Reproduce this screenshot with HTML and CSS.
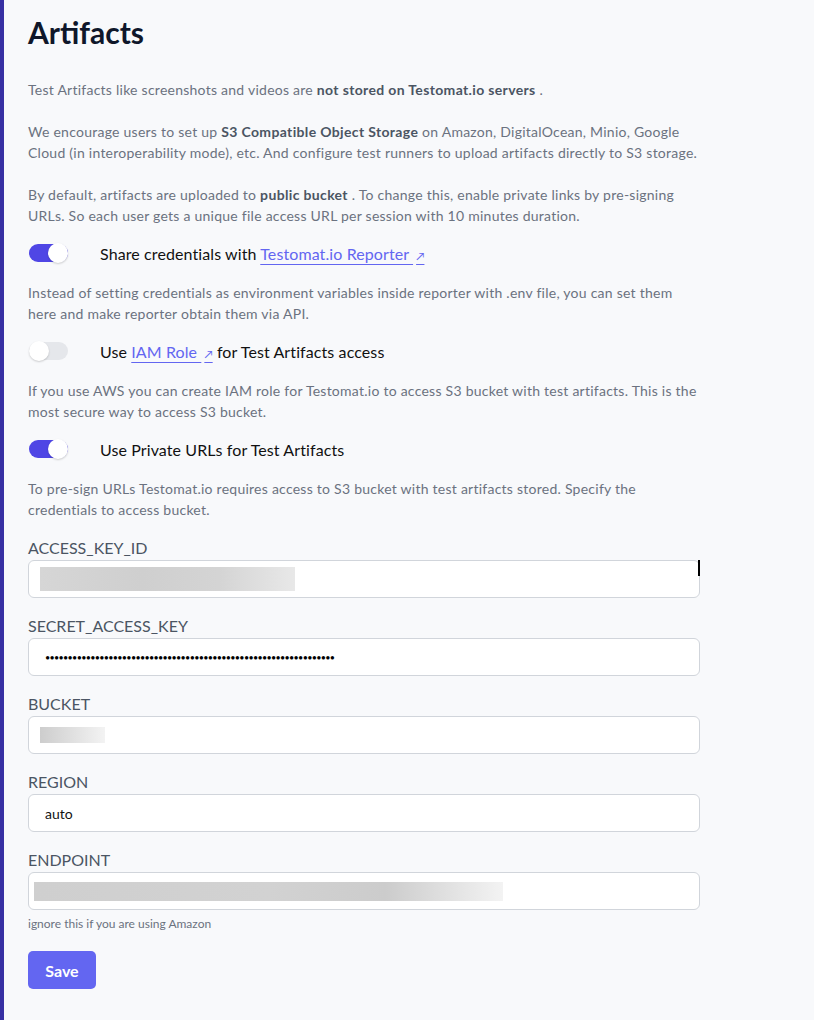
FILE: index.html
```html
<!DOCTYPE html>
<html>
<head>
<meta charset="utf-8">
<link rel="stylesheet" href="styles.css">
</head>
<body>
<div class="page">
  <main class="content">
    <h1 class="title">Artifacts</h1>
    <p class="text">Test Artifacts like screenshots and videos are <b>not stored on Testomat.io servers</b> .</p>
    <p class="text">We encourage users to set up <b>S3 Compatible Object Storage</b> on Amazon, DigitalOcean, Minio, Google Cloud (in interoperability mode), etc. And configure test runners to upload artifacts directly to S3 storage.</p>
    <p class="text">By default, artifacts are uploaded to <b>public bucket</b> . To change this, enable private links by pre-signing URLs. So each user gets a unique file access URL per session with 10 minutes duration.</p>

    <div class="toggle-row">
      <span class="toggle on"><span class="knob"></span></span>
      <span class="toggle-label">Share credentials with <a class="link">Testomat.io Reporter <span class="ext">↗</span></a></span>
    </div>
    <p class="text">Instead of setting credentials as environment variables inside reporter with .env file, you can set them here and make reporter obtain them via API.</p>

    <div class="toggle-row">
      <span class="toggle"><span class="knob"></span></span>
      <span class="toggle-label">Use <a class="link">IAM Role <span class="ext">↗</span></a> for Test Artifacts access</span>
    </div>
    <p class="text">If you use AWS you can create IAM role for Testomat.io to access S3 bucket with test artifacts. This is the most secure way to access S3 bucket.</p>

    <div class="toggle-row">
      <span class="toggle on"><span class="knob"></span></span>
      <span class="toggle-label">Use Private URLs for Test Artifacts</span>
    </div>
    <p class="text">To pre-sign URLs Testomat.io requires access to S3 bucket with test artifacts stored. Specify the credentials to access bucket.</p>

    <div class="fields">
      <div class="field">
        <label class="label">ACCESS_KEY_ID</label>
        <div class="input caret"><span class="blur blur-key"></span></div>
      </div>
      <div class="field">
        <label class="label">SECRET_ACCESS_KEY</label>
        <div class="input"><span class="dots">••••••••••••••••••••••••••••••••••••••••••••••••••••••••••••••••</span></div>
      </div>
      <div class="field">
        <label class="label">BUCKET</label>
        <div class="input"><span class="blur blur-bucket"></span></div>
      </div>
      <div class="field">
        <label class="label">REGION</label>
        <div class="input"><span class="value">auto</span></div>
      </div>
      <div class="field">
        <label class="label">ENDPOINT</label>
        <div class="input"><span class="blur blur-endpoint"></span></div>
        <div class="hint">ignore this if you are using Amazon</div>
      </div>
    </div>

    <button class="save">Save</button>
  </main>
</div>
</body>
</html>
```

FILE: styles.css
```css
html, body {
  margin: 0;
  padding: 0;
}
body {
  background: #f8f9fb;
  font-family: "Lato", "Noto Sans", sans-serif;
  color: #111827;
}
.page {
  min-height: 1020px;
  border-left: 4px solid #3730a3;
  box-sizing: border-box;
}
.content {
  width: 672px;
  padding: 0 0 0 24px;
}
.title {
  margin: 0;
  padding-top: 12px;
  font-size: 30px;
  line-height: 40px;
  font-weight: 700;
  color: #0f172a;
}
.text {
  margin: 0;
  font-size: 14px;
  line-height: 21px;
  letter-spacing: 0.25px;
  color: #6b7280;
}
.title + .text { margin-top: 27px; }
.text + .text { margin-top: 21px; }
.text b { color: #4b5563; font-weight: 700; letter-spacing: 0.35px; }

.toggle-row {
  display: flex;
  align-items: center;
  margin-top: 15px;
  margin-bottom: 17px;
  height: 24px;
}
.toggle {
  position: relative;
  width: 39px;
  height: 18px;
  border-radius: 9px;
  background: #e5e7eb;
  margin-left: 1px;
  flex: none;
}
.toggle.on { background: #4f46e5; }
.knob {
  position: absolute;
  top: -1px;
  left: 0;
  width: 20px;
  height: 20px;
  border-radius: 50%;
  background: #fff;
  box-shadow: 0 1px 2px rgba(0,0,0,0.18);
}
.toggle.on .knob { left: 19px; }
.toggle-label {
  margin-left: 32px;
  font-size: 16px;
  letter-spacing: 0.1px;
  color: #111;
}
.link {
  color: #6366f1;
  text-decoration: underline;
  text-underline-offset: 4px;
  text-decoration-thickness: 1px;
}
.ext { font-size: 11px; margin-left: 3px; }

.fields {
  margin-top: 16px;
  display: flex;
  flex-direction: column;
  gap: 16px;
}
.field { display: flex; flex-direction: column; }
.label {
  font-size: 16px;
  line-height: 24px;
  color: #4b5563;
}
.input {
  position: relative;
  height: 38px;
  box-sizing: border-box;
  border: 1px solid #d1d5db;
  border-radius: 6px;
  background: #fff;
  display: flex;
  align-items: center;
  padding-left: 16px;
}
.caret::after {
  content: "";
  position: absolute;
  right: -1px;
  top: -1px;
  width: 2px;
  height: 16px;
  background: #000;
}
.blur {
  display: block;
  height: 24px;
  background: linear-gradient(90deg, #d6d6d6 0%, #cfcfcf 40%, #d4d4d4 70%, #e8e8e8 100%);
  filter: blur(0.5px);
}
.blur-key { width: 255px; margin-left: -5px; }
.blur-bucket { width: 65px; height: 16px; margin-left: -5px; background: linear-gradient(90deg, #cdcdcd, #f3f3f3); }
.blur-endpoint { width: 469px; height: 19px; margin-left: -11px; background: linear-gradient(90deg, #cfcfcf 0%, #d2d2d2 50%, #cccccc 75%, #f3f3f3 100%); }
.dots {
  font-size: 9px;
  letter-spacing: -0.7px;
  color: #000;
}
.value { font-size: 14px; color: #111; }
.hint {
  margin-top: 5px;
  font-size: 12px;
  line-height: 18px;
  color: #6b7280;
}
.save {
  margin-top: 18px;
  width: 68px;
  height: 38px;
  border: none;
  border-radius: 5px;
  background: #6366f1;
  color: #fff;
  font-family: inherit;
  font-size: 16px;
  font-weight: 700;
}
```
